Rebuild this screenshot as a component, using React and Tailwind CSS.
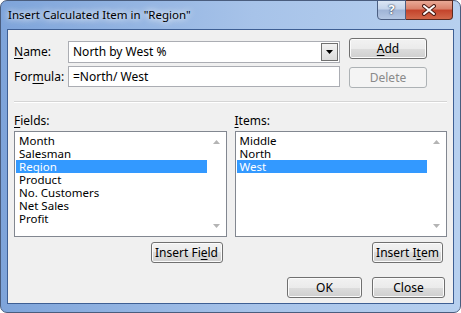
const btn =
  "flex items-center justify-center h-[21px] rounded-[3px] border border-[#707070] bg-[linear-gradient(#f2f2f2,#ebebeb_50%,#dddddd_50%,#cfcfcf)] shadow-[inset_0_0_0_1px_#fbfbfb] text-[12px] text-black";

function U({ children }) {
  return <span className="underline underline-offset-[2px]">{children}</span>;
}

function ListBox({ items, selected }) {
  return (
    <div className="flex h-[106px] border border-[#828790] bg-white">
      <div className="flex-1 flex flex-col pt-[2px] pl-px">
        {items.map((it) => (
          <div
            key={it}
            className={
              "h-[13px] leading-[13px] pl-[3px] text-[11.5px] " +
              (it === selected ? "bg-[#3399ff] text-white" : "text-black")
            }
          >
            {it}
          </div>
        ))}
      </div>
      <div className="w-[19px] flex flex-col items-center justify-between py-[8px]">
        <svg width="7" height="4" viewBox="0 0 7 4">
          <path d="M0 4 L3.5 0 L7 4 Z" fill="#b4b4b4" />
        </svg>
        <svg width="7" height="4" viewBox="0 0 7 4">
          <path d="M0 0 L3.5 4 L7 0 Z" fill="#b4b4b4" />
        </svg>
      </div>
    </div>
  );
}

export default function App() {
  return (
    <div className="w-[461px] h-[313px] font-['Noto_Sans',sans-serif] text-black">
      <div className="w-full h-full flex flex-col rounded-[7px] border border-[#4a5d7e] bg-[linear-gradient(to_right,#7ea4da,#a7c3e9_55%,#b7d0ef)]">
        {/* Title bar */}
        <div className="h-[28px] flex items-start justify-between">
          <div className="pl-[7px] pt-[6px] text-[11.5px] leading-[16px] [text-shadow:0_0_6px_#ffffff,0_0_10px_#ffffff]">
            Insert Calculated Item in "Region"
          </div>
          <div className="flex mr-[7px] -mt-px">
            <div className="w-[29px] h-[20px] flex items-center justify-center rounded-bl-[4px] border border-[#4b5f82] bg-[linear-gradient(#dbe6f4,#c3d3ea_45%,#9fb4d6_50%,#b4c7e3)] text-white font-bold text-[13px] [text-shadow:0_0_2px_#2a3a55,0_0_1px_#2a3a55]">
              ?
            </div>
            <div className="w-[47px] h-[20px] flex items-center justify-center rounded-br-[4px] border border-l-0 border-[#5a2a20] bg-[linear-gradient(#e9a996,#d9816a_45%,#c4432b_50%,#d2684a)]">
              <svg width="14" height="12" viewBox="0 0 14 12">
                <path d="M2 2 L12 10 M12 2 L2 10" stroke="#4a1a12" strokeWidth="4" strokeLinecap="round" />
                <path d="M2 2 L12 10 M12 2 L2 10" stroke="#ffffff" strokeWidth="2" strokeLinecap="round" />
              </svg>
            </div>
          </div>
        </div>

        {/* Client area */}
        <div className="mx-[6px] mb-[8px] flex-1 border border-[#3e5f94] bg-[#f0f0f0] px-[6px] pt-[8px]">
          {/* Name / Formula + Add / Delete */}
          <div className="flex items-start">
            <div className="w-[326px] flex flex-col gap-[3px] pt-[3px]">
              <div className="flex items-center">
                <div className="w-[54px] text-[12px]">
                  <U>N</U>ame:
                </div>
                <div className="flex-1 h-[22px] flex items-center border border-[#abadb3] bg-white pl-[4px] pr-px">
                  <span className="flex-1 text-[12px]">North by West %</span>
                  <div className="w-[17px] h-[18px] flex items-center justify-center border border-[#707070] bg-[linear-gradient(#f2f2f2,#dcdcdc)]">
                    <svg width="7" height="4" viewBox="0 0 7 4">
                      <path d="M0 0 L7 0 L3.5 4 Z" fill="#000" />
                    </svg>
                  </div>
                </div>
              </div>
              <div className="flex items-center">
                <div className="w-[54px] text-[12px]">
                  For<U>m</U>ula:
                </div>
                <div className="flex-1 h-[21px] flex items-center border border-[#abadb3] bg-white pl-[4px]">
                  <span className="text-[12px]">=North/ West</span>
                </div>
              </div>
            </div>
            <div className="ml-[9px] w-[78px] flex flex-col gap-[8px]">
              <div className={btn + " border-[#3c7fb1] shadow-[inset_0_0_0_1px_#8fd3f5]"}>
                <span>
                  <U>A</U>dd
                </span>
              </div>
              <div className="flex items-center justify-center h-[21px] rounded-[3px] border border-[#adb2b5] bg-[#f4f4f4] text-[12px] text-[#8a8a8a]">
                Delete
              </div>
            </div>
          </div>

          {/* Separator */}
          <div className="mt-[13px] h-px bg-[#d5d5d5]" />
          <div className="h-px bg-white" />

          {/* Lists */}
          <div className="mt-[10px] grid grid-cols-2 gap-[8px]">
            <div className="flex flex-col">
              <div className="h-[16px] leading-[16px] text-[12px] mb-[2px]">
                <U>F</U>ields:
              </div>
              <ListBox
                items={["Month", "Salesman", "Region", "Product", "No. Customers", "Net Sales", "Profit"]}
                selected="Region"
              />
              <div className="flex justify-end mt-[5px] pr-[4px]">
                <div className={btn + " w-[72px] h-[20px]"}>
                  <span>
                    Insert Fi<U>e</U>ld
                  </span>
                </div>
              </div>
            </div>
            <div className="flex flex-col">
              <div className="h-[16px] leading-[16px] text-[12px] mb-[2px]">
                <U>I</U>tems:
              </div>
              <ListBox items={["Middle", "North", "West"]} selected="West" />
              <div className="flex justify-end mt-[5px] pr-[4px]">
                <div className={btn + " w-[71px] h-[20px]"}>
                  <span>
                    Insert I<U>t</U>em
                  </span>
                </div>
              </div>
            </div>
          </div>

          {/* OK / Close */}
          <div className="mt-[14px] flex justify-end gap-[10px] pr-[2px]">
            <div className={btn + " w-[75px]"}>OK</div>
            <div className={btn + " w-[73px]"}>Close</div>
          </div>
        </div>
      </div>
    </div>
  );
}
